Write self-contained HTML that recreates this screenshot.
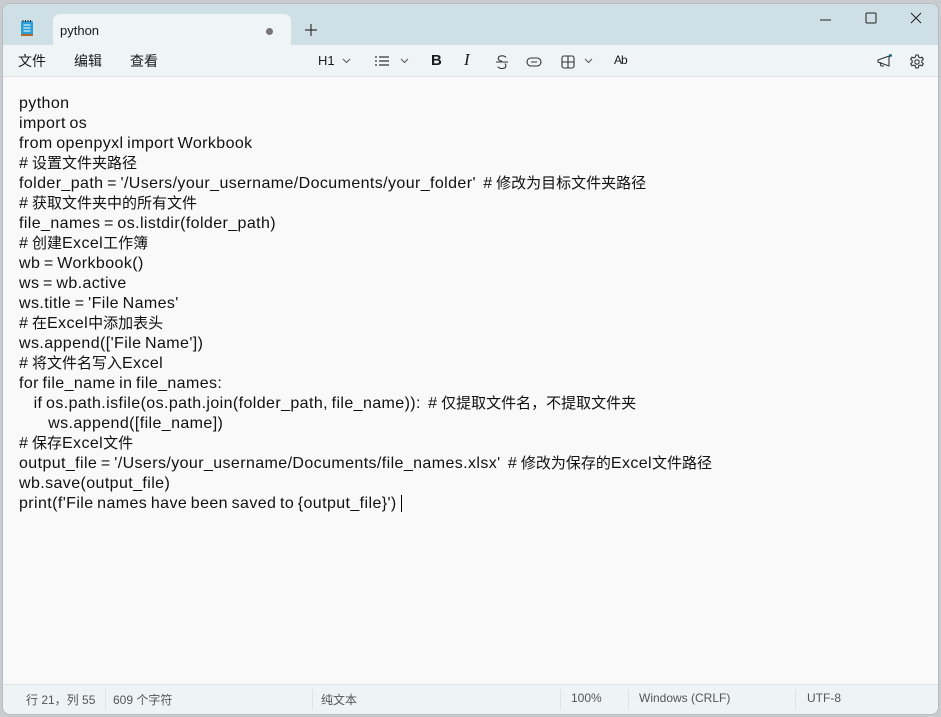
<!DOCTYPE html>
<html><head><meta charset="utf-8"><style>
*{margin:0;padding:0;box-sizing:border-box}
body{width:941px;height:717px;background:#c9ccce;font-family:"Liberation Sans","Noto Sans CJK SC",sans-serif;overflow:hidden;position:relative}
.win{position:absolute;left:2px;top:3px;width:937px;height:712px;border-radius:8px;overflow:hidden;background:#f9f9f9;border:1px solid #b8bcc0}
.title{position:absolute;left:0;top:0;right:0;height:41px;background:#cfdfe6}
.tab{position:absolute;left:50px;top:10px;width:238px;height:34px;background:#eff4f7;border-radius:7px 7px 0 0}
.tab span{position:absolute;left:7px;top:9px;font-size:13px;color:#1a1a1a}
.dot{position:absolute;left:213px;top:14px;width:7px;height:7px;border-radius:50%;background:#777}
.tool{position:absolute;left:0;top:41px;right:0;height:32px;background:#eff4f7;border-bottom:1px solid #e0e4e7;font-size:14px;color:#1a1a1a}
.tool .m{position:absolute;top:6px}
.content{position:absolute;left:16px;top:90px;font-size:16px;letter-spacing:0.4px;word-spacing:-1.2px;line-height:20px;color:#111;white-space:pre}
.content i{font-style:normal;font-size:15px;letter-spacing:0}
.status{position:absolute;left:0;bottom:0;right:0;height:30px;background:#eef3f6;border-top:1px solid #dde3e7;font-size:12px;color:#555}
.status span{position:absolute;top:6px}
.sep{position:absolute;top:4px;width:1px;height:21px;background:#dfe3e6}
.ic{position:absolute}
</style></head><body>
<div class="win">
<div class="title">
 <svg class="ic" style="left:17px;top:15px" width="14" height="18" viewBox="0 0 14 18"><rect x="1" y="2" width="12" height="15" rx="1.5" fill="#2a9fd6"/><rect x="1" y="15" width="12" height="2" fill="#b06a2a"/><path d="M3.5 6h7M3.5 9h7M3.5 12h7" stroke="#fff" stroke-width="1"/><path d="M3 1v2M5.5 1v2M8 1v2M10.5 1v2" stroke="#333" stroke-width="1"/></svg>
 <div class="tab"><span>python</span><div class="dot"></div></div>
 <svg class="ic" style="left:302px;top:20px" width="12" height="12"><path d="M6 0v12M0 6h12" stroke="#333" stroke-width="1.2"/></svg>
 <svg class="ic" style="left:817px;top:14px" width="12" height="4"><path d="M0 2h11" stroke="#222"/></svg>
 <svg class="ic" style="left:862px;top:8px" width="12" height="12"><rect x="1" y="1" width="10" height="10" rx="1" fill="none" stroke="#222"/></svg>
 <svg class="ic" style="left:907px;top:8px" width="12" height="12"><path d="M1 1l10 10M11 1L1 11" stroke="#222"/></svg>
</div>
<div class="tool">
 <span class="m" style="left:15px">文件</span><span class="m" style="left:71px">编辑</span><span class="m" style="left:127px">查看</span>
 <span class="m" style="left:315px;font-size:13px;top:8px">H1</span>
 <svg class="ic" style="left:339px;top:13px" width="9" height="6"><path d="M1 1l3.5 3.5L8 1" stroke="#555" fill="none"/></svg>
 <svg class="ic" style="left:372px;top:11px" width="14" height="10"><path d="M0 1h2M0 5h2M0 9h2M4 1h10M4 5h10M4 9h10" stroke="#333" stroke-width="1.2"/></svg>
 <svg class="ic" style="left:397px;top:13px" width="9" height="6"><path d="M1 1l3.5 3.5L8 1" stroke="#555" fill="none"/></svg>
 <span class="m" style="left:428px;font-weight:bold;font-size:15px;top:7px">B</span>
 <span class="m" style="left:461px;font-style:italic;font-family:'Liberation Serif',serif;font-size:17px;top:5px">I</span>
 <svg class="ic" style="left:492px;top:10px" width="14" height="14"><path d="M11 2.5C10 1 8.5 0.8 7 0.8 4.5 0.8 3.2 2 3.2 3.6 3.2 5 4.5 5.7 7 6.3M1 7h12M10 8.5c.8.8.9 1.6.9 2.4 0 1.8-1.6 2.6-3.9 2.6-1.8 0-3.3-.6-4.2-1.8" stroke="#333" fill="none" stroke-width="1.1"/></svg>
 <svg class="ic" style="left:523px;top:12px" width="16" height="10"><rect x="1" y="1" width="14" height="8" rx="4" fill="none" stroke="#333" stroke-width="1.1"/><path d="M5 5h6" stroke="#333" stroke-width="1.1"/></svg>
 <svg class="ic" style="left:558px;top:10px" width="14" height="14"><rect x="1" y="1" width="12" height="12" rx="2" fill="none" stroke="#333" stroke-width="1.1"/><path d="M7 1v12M1 7h12" stroke="#333" stroke-width="1.1"/></svg>
 <svg class="ic" style="left:581px;top:13px" width="9" height="6"><path d="M1 1l3.5 3.5L8 1" stroke="#555" fill="none"/></svg>
 <span class="m" style="left:611px;font-size:12px;top:8px;letter-spacing:-1px">Ab</span>
 <svg class="ic" style="left:873px;top:9px" width="16" height="14"><path d="M2 6l11-4v10L2 8z M4 8l1 4h3" stroke="#333" fill="none" stroke-width="1.1"/><circle cx="14.5" cy="1.5" r="1.5" fill="#1a6e8e"/></svg>
 <svg class="ic" style="left:906px;top:9px" width="16" height="16" viewBox="0 0 16 16"><circle cx="8" cy="8" r="2.2" fill="none" stroke="#333" stroke-width="1.1"/><path d="M6.8 1h2.4l.4 2 1.6.9 1.9-.7 1.2 2.1-1.5 1.3v1.8l1.5 1.3-1.2 2.1-1.9-.7-1.6.9-.4 2H6.8l-.4-2-1.6-.9-1.9.7-1.2-2.1 1.5-1.3V6.6L1.7 5.3l1.2-2.1 1.9.7 1.6-.9z" fill="none" stroke="#333" stroke-width="1.1"/></svg>
</div>
<div class="content">python
import os
from openpyxl import Workbook
# <i>设置文件夹路径</i>
folder_path = '/Users/your_username/Documents/your_folder'  # <i>修改为目标文件夹路径</i>
# <i>获取文件夹中的所有文件</i>
file_names = os.listdir(folder_path)
# <i>创建</i>Excel<i>工作簿</i>
wb = Workbook()
ws = wb.active
ws.title = 'File Names'
# <i>在</i>Excel<i>中添加表头</i>
ws.append(['File Name'])
# <i>将文件名写入</i>Excel
for file_name in file_names:
    if os.path.isfile(os.path.join(folder_path, file_name)):  # <i>仅提取文件名，不提取文件夹</i>
        ws.append([file_name])
# <i>保存</i>Excel<i>文件</i>
output_file = '/Users/your_username/Documents/file_names.xlsx'  # <i>修改为保存的</i>Excel<i>文件路径</i>
wb.save(output_file)
print(f'File names have been saved to {output_file}') <span style="border-left:1px solid #000;margin-left:1px"></span></div>
<div class="status">
 <span style="left:23px">行 21，列 55</span><div class="sep" style="left:102px"></div>
 <span style="left:110px">609 个字符</span><div class="sep" style="left:309px"></div>
 <span style="left:318px">纯文本</span><div class="sep" style="left:557px"></div>
 <span style="left:568px">100%</span><div class="sep" style="left:625px"></div>
 <span style="left:636px">Windows (CRLF)</span><div class="sep" style="left:792px"></div>
 <span style="left:804px">UTF-8</span>
</div>
</div>
</body></html>
